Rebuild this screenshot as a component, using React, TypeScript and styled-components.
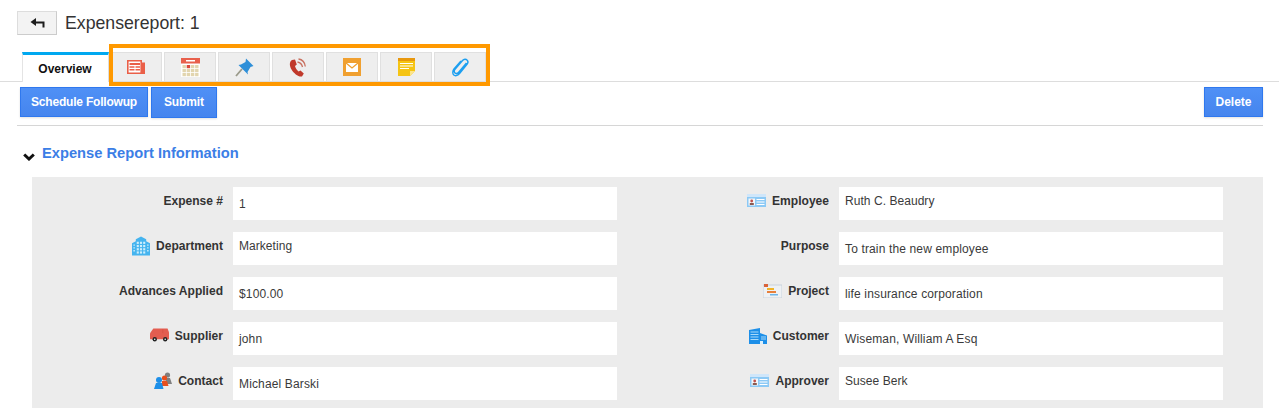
import React from "react";
import styled, { createGlobalStyle } from "styled-components";

const Global = createGlobalStyle`
  html, body { margin: 0; padding: 0; background: #fff; overflow: hidden; }
  body { font-family: "Liberation Sans", Arial, sans-serif; color: #333; }
`;
const Page = styled.div`width: 1279px; height: 408px; overflow: hidden; position: relative;`;
const Header = styled.div`display: flex; align-items: center; gap: 8px; padding: 11px 0 0 17px; height: 24px;`;
const BackButton = styled.button`
  width: 40px; height: 24px; padding: 0; display: flex; align-items: center; justify-content: center;
  background: #f3f3f3; border: 1px solid #ddd; border-bottom-color: #ccc; border-right-color: #ccc;
`;
const Title = styled.h1`margin: 0; font-size: 17.7px; font-weight: 400; color: #333; line-height: 24px;`;
const TabBar = styled.div`
  display: flex; height: 29px; margin: 17px 0 0 0; padding-left: 22px; border-bottom: 1px solid #ddd; position: relative;
`;
const ActiveTab = styled.div`
  width: 84px; height: 27px; border-top: 3px solid #00a8f0; border-left: 1px solid #e4e4e4; border-right: 1px solid #ddd;
  background: #fff; margin-bottom: -1px; display: flex; align-items: center; justify-content: center;
  font-size: 12px; font-weight: 700; color: #111; padding-right: 1px; box-sizing: content-box;
`;
const IconTabs = styled.div`display: flex; gap: 2px; margin-left: 1px;`;
const IconTab = styled.div`
  width: 50px; height: 28px; background: #eeeeee; border: 1px solid #e0e0e0; border-bottom: none;
  display: flex; align-items: center; justify-content: center;
`;
const Highlight = styled.div`
  position: absolute; left: 109px; top: -8px; width: 373px; height: 34px; border: 4px solid #ff9900; pointer-events: none;
`;
const Actions = styled.div`
  display: flex; gap: 3px; padding: 5px 16px 0 20px; height: 31px;
`;
const ActionButton = styled.button<{ $end?: boolean; $tall?: boolean; $tight?: boolean }>`
  height: ${p => (p.$tall ? 31 : 30)}px; padding: 0 ${p => (p.$tall ? 12 : p.$tight ? 10 : 10.5)}px 1px; border: 1px solid #2f78ee;
  background: linear-gradient(#4f90f6, #4585ee); color: #fff; font: 700 12px "Liberation Sans", Arial, sans-serif;
  letter-spacing: ${p => (p.$tight ? "-0.2px" : p.$tall ? "-0.1px" : "0")};
  box-shadow: 0 1px 2px rgba(0,0,0,.12);
  margin-left: ${p => (p.$end ? "auto" : 0)};
`;
const Rule = styled.div`height: 1px; background: #d6d6d6; margin: 7px 16px 0 17px;`;
const Section = styled.div`display: flex; align-items: center; gap: 7px; padding: 18px 0 0 23px; height: 18px;`;
const SectionTitle = styled.h2`margin: 0; font-size: 14.7px; font-weight: 700; color: #3b7ee6; line-height: 18px;`;
const ChevronBox = styled.span`display: block; padding-top: 7px;`;
const Panel = styled.div`
  margin: 15px 16px 0 32px; background: #ececec; padding: 10px 40px 0 0; height: 231px; box-sizing: border-box;
  display: grid; grid-template-columns: 585px 606px; grid-auto-rows: 33px; row-gap: 12px;
`;
const Field = styled.div`display: flex;`;
const Label = styled.label`
  flex: 1; display: flex; align-items: center; justify-content: flex-end; gap: 6px; height: 27px; padding-right: 10px;
  font-size: 12.05px; font-weight: 700; color: #333;
`;
const Value = styled.div<{ $high?: boolean }>`
  width: 384px; height: 33px; background: #fff; padding: ${p => (p.$high ? 7 : 10)}px 6px 0; box-sizing: border-box;
  font-size: 12px; line-height: 14px; color: #3a3a3a; letter-spacing: ${p => (p.$high ? "0.05px" : "0.14px")};
`;

const Svg = ({ w, h, children, vb }: { w: number; h: number; vb?: string; children: React.ReactNode }) => (
  <svg width={w} height={h} viewBox={vb || `0 0 ${w} ${h}`} style={{ display: "block", flex: "none" }}>{children}</svg>
);

const BackIcon = () => (
  <Svg w={15} h={10}><path d="M6 0 L0.5 4 L6 8 V5.5 H12.5 V9.5 H14.5 V3.5 H6 Z" fill="#1c1c1c" /></Svg>
);
const NewsIcon = () => (
  <Svg w={18} h={14}>
    <path d="M0.8 0.8 H14.2 V13.2 H0.8 Z" fill="#fff" stroke="#ea5f48" strokeWidth="1.6" />
    <path d="M15 2.5 H18 V14 H15 Z" fill="#ea5f48" />
    <path d="M2.5 3 H13 V5 H2.5 Z M2.5 6.3 H7.5 V7.8 H2.5 Z M8.5 6.3 H13 V7.8 H8.5 Z M2.5 9 H7.5 V10.5 H2.5 Z M8.5 9 H13 V10.5 H8.5 Z" fill="#ea5f48" />
  </Svg>
);
const CalendarIcon = () => (
  <Svg w={19} h={19}>
    <rect width="19" height="19" fill="#fff" />
    <rect width="19" height="5.5" fill="#e8604c" />
    <rect x="5" y="2" width="9" height="1.5" fill="#fff" />
    {[0, 1, 2, 3].map(c => [0, 1, 2].map(r => (
      <rect key={`${c}${r}`} x={1.5 + c * 4.2} y={7 + r * 4} width="3.4" height="3.2" fill={c === 1 && r === 0 ? "#d9483b" : "#e2d5ae"} />
    )))}
  </Svg>
);
const PinIcon = () => (
  <Svg w={19} h={19}>
    <path d="M1 18 L7 11" stroke="#9a9a8a" strokeWidth="1.8" />
    <path d="M11 0.5 L18.5 8 L15.5 9 L12.5 14 L13 16.5 L3.5 7 L6 6.5 L10.5 4 Z" fill="#2e8fd8" />
  </Svg>
);
const PhoneIcon = () => (
  <Svg w={19} h={19}>
    <path d="M3 2 C0 4 0.5 8 2.5 11.5 C5 15.5 9 19 13 18.5 L14.8 15.5 L11.5 12.5 L9.5 13.5 C7.8 12 6.5 10 6 8 L7.8 6.5 L6 1.5 Z" fill="#c0392b" />
    <path d="M8.5 4 C11 4.5 13 6.5 13.5 9 M9.5 1 C13 1.5 15.8 4.5 16.3 8.5" fill="none" stroke="#c9705f" strokeWidth="1.3" />
  </Svg>
);
const MailIcon = () => (
  <Svg w={18} h={18}>
    <rect width="18" height="18" fill="#f0a030" />
    <rect x="3" y="5" width="12" height="9" fill="#fff" />
    <path d="M3 5 L9 10 L15 5" fill="none" stroke="#f0a030" strokeWidth="1.3" />
  </Svg>
);
const NoteIcon = () => (
  <Svg w={17} h={18}>
    <path d="M0 0 H17 V13 L12 18 H0 Z" fill="#f5c414" />
    <rect width="17" height="3" fill="#e8980e" />
    <path d="M2 5.5 H15 M2 8 H15 M2 10.5 H11" stroke="#fff" strokeWidth="1.1" />
    <path d="M12 18 V13 H17 Z" fill="#fde58a" />
  </Svg>
);
const ClipIcon = () => (
  <Svg w={17} h={19}>
    <path d="M14.5 5 L6.5 14.5 C5.2 16 3.5 15.5 3 15 C2 14 2 12.5 3 11.3 L10.5 2.5 C12 1 14 1 15 2 C16.3 3.2 16 5 15 6.3 L7.5 15.5 C5.5 18 3 18 1.8 17 C0.5 15.8 0.5 13 2 11 L9 3" fill="none" stroke="#1d9ff0" strokeWidth="1.5" />
  </Svg>
);
const Chevron = () => (
  <Svg w={12} h={8}><path d="M1.2 1.5 L6 6 L10.8 1.5" fill="none" stroke="#111" strokeWidth="3" /></Svg>
);
const BuildingIcon = () => (
  <Svg w={18} h={20} vb="0 0 19 20">
    <path d="M0 7 L4 5 V3 L9.5 0 L15 3 V5 L19 7 V20 H0 Z" fill="#45b4ef" />
    {[0, 1, 2].map(c => [0, 1, 2, 3].map(r => (
      <rect key={`${c}${r}`} x={5 + c * 3.4} y={5.5 + r * 3.4} width="2.2" height="2.3" fill="#cdeefc" />
    )))}
    <path d="M1.5 9 H3 M1.5 12 H3 M1.5 15 H3 M16 9 H17.5 M16 12 H17.5 M16 15 H17.5" stroke="#cdeefc" strokeWidth="1.4" />
  </Svg>
);
const TruckIcon = () => (
  <Svg w={19} h={17} vb="0 0 20 17">
    <path d="M0 6 L3.5 1 H18.5 L20 5 V12.5 H0 Z" fill="#e35d50" />
    <path d="M13.5 2 V6" stroke="#d04a3e" strokeWidth="0.6" />
    <circle cx="5" cy="12.5" r="2.3" fill="#222" /><circle cx="5" cy="12.5" r="0.8" fill="#fff" />
    <circle cx="16" cy="12.5" r="2.3" fill="#222" /><circle cx="16" cy="12.5" r="0.8" fill="#fff" />
  </Svg>
);
const ContactIcon = () => (
  <Svg w={18} h={17}>
    <circle cx="13.5" cy="3" r="2.6" fill="#808080" /><path d="M11 6 H16 L18 12 H13 Z" fill="#808080" />
    <circle cx="10.5" cy="6" r="2.6" fill="#e8501f" /><path d="M8 9 H13 L14.5 14 H8 Z" fill="#e8501f" />
    <circle cx="5" cy="8" r="3" fill="#1d8fe8" /><path d="M2 11 H8 L9.5 17 H0 Z" fill="#1d8fe8" />
  </Svg>
);
const CardIcon = () => (
  <Svg w={19} h={13}>
    <rect width="19" height="13" fill="#cfe6fa" />
    <rect y="3" width="19" height="10" fill="#8cc9f5" />
    <rect x="1.5" y="4.5" width="6.5" height="7" fill="#f2f6fa" />
    <circle cx="4.7" cy="7" r="1.4" fill="#c0504a" /><rect x="2.8" y="9" width="4" height="2" fill="#8a5a50" />
    <path d="M9.5 5.5 H17.5 M9.5 8 H17.5 M9.5 10.5 H17.5" stroke="#fff" strokeWidth="1.1" />
  </Svg>
);
const ProjectIcon = () => (
  <Svg w={19} h={14}>
    <rect y="1" width="19" height="13" fill="#eef1f4" stroke="#c8d2dc" />
    <rect x="1" y="0" width="4" height="3" fill="#d9633a" />
    <rect x="4" y="4" width="7" height="2" fill="#f0b429" />
    <rect x="4" y="7" width="9" height="2" fill="#e8803a" />
    <rect x="7" y="10" width="8" height="1.5" fill="#6fb6e8" />
  </Svg>
);
const CompanyIcon = () => (
  <Svg w={18} h={16}>
    <path d="M0 2 L11 0 V16 H0 Z" fill="#1d8fe8" />
    <path d="M11 5 L18 7.5 V16 H11 Z" fill="#1d8fe8" />
    <path d="M1.5 4 H9.5 M1.5 6.5 H9.5 M1.5 9 H9.5 M1.5 11.5 H9.5 M12 9 H17 M12 11 H17" stroke="#a8dafa" strokeWidth="1" />
    <rect x="11" y="13" width="3" height="3" fill="#d9effd" />
  </Svg>
);

type Row = { label: string; value: string; icon?: React.ReactNode; high?: boolean };
const rows: Row[] = [
  { label: "Expense #", value: "1" },
  { label: "Employee", value: "Ruth C. Beaudry", icon: <CardIcon />, high: true },
  { label: "Department", value: "Marketing", icon: <BuildingIcon />, high: true },
  { label: "Purpose", value: "To train the new employee" },
  { label: "Advances Applied", value: "$100.00" },
  { label: "Project", value: "life insurance corporation", icon: <ProjectIcon /> },
  { label: "Supplier", value: "john", icon: <TruckIcon /> },
  { label: "Customer", value: "Wiseman, William A Esq", icon: <CompanyIcon /> },
  { label: "Contact", value: "Michael Barski", icon: <ContactIcon /> },
  { label: "Approver", value: "Susee Berk", icon: <CardIcon />, high: true },
];

export default function App() {
  return (
    <Page>
      <Global />
      <Header>
        <BackButton aria-label="Back"><BackIcon /></BackButton>
        <Title>Expensereport: 1</Title>
      </Header>
      <TabBar>
        <ActiveTab>Overview</ActiveTab>
        <IconTabs>
          <IconTab><NewsIcon /></IconTab>
          <IconTab><CalendarIcon /></IconTab>
          <IconTab><PinIcon /></IconTab>
          <IconTab><PhoneIcon /></IconTab>
          <IconTab><MailIcon /></IconTab>
          <IconTab><NoteIcon /></IconTab>
          <IconTab><ClipIcon /></IconTab>
        </IconTabs>
        <Highlight />
      </TabBar>
      <Actions>
        <ActionButton $tight>Schedule Followup</ActionButton>
        <ActionButton $tall>Submit</ActionButton>
        <ActionButton $end>Delete</ActionButton>
      </Actions>
      <Rule />
      <Section>
        <ChevronBox><Chevron /></ChevronBox>
        <SectionTitle>Expense Report Information</SectionTitle>
      </Section>
      <Panel>
        {rows.map(r => (
          <Field key={r.label}>
            <Label>{r.icon}{r.label}</Label>
            <Value $high={r.high}>{r.value}</Value>
          </Field>
        ))}
      </Panel>
    </Page>
  );
}
